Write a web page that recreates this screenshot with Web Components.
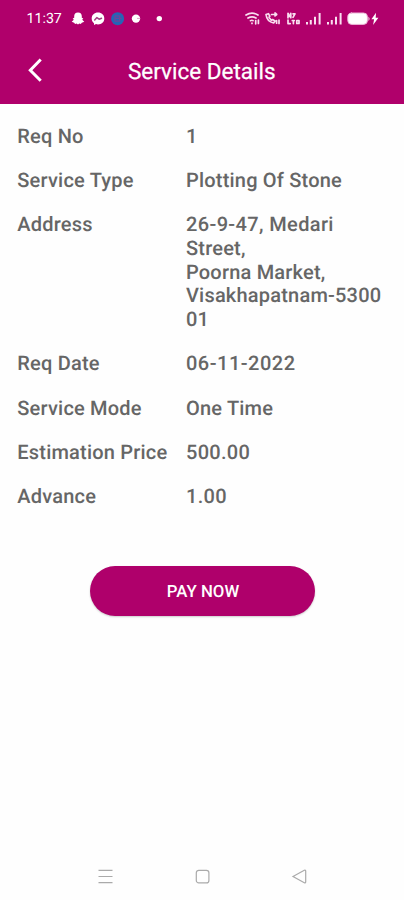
<!DOCTYPE html>
<html lang="en"><head><meta charset="utf-8"><title>Service Details</title>
<style>html,body{margin:0;background:#fefefe}body{font-family:Roboto,"Liberation Sans",sans-serif;text-rendering:geometricPrecision}</style></head>
<body>
<service-screen></service-screen>
<script>
const define = (name, html) => customElements.define(name, class extends HTMLElement {
  constructor() { super(); this.attachShadow({ mode: 'open' }).innerHTML = html; }
});
define('status-bar', `<style>
:host{display:flex;height:38px;align-items:center;color:#fff;box-sizing:border-box}
time{padding-left:26.5px;width:44.5px;font-size:14.2px;font-weight:400;line-height:16px}
svg{display:block;flex:none}
</style><time>11:37</time>
<svg width="333" height="38" viewBox="71 0 333 38" fill="none" stroke-linecap="round" stroke-linejoin="round">
<path fill="#fff" d="M78 12.5c2.6 0 3.8 1.6 3.8 3.7v1.5l1.5.8-1.1 1.3 2.1 2-2.5.9-1 1.3-1.5-.4-1.3.8-1.4-.8-1.5.4-1-1.3-2.4-.9 2.1-2-1.1-1.3 1.5-.8v-1.5c0-2.1 1.2-3.7 3.8-3.7z"/>
<path fill="#fff" d="M98 12.5c3.6 0 6.3 2.5 6.3 6s-2.7 5.9-6.3 5.9l-2-.3-2 .8v-1.7c-1.4-1.1-2.3-2.7-2.3-4.7 0-3.5 2.7-6 6.3-6z"/>
<path stroke="#a43f83" stroke-width="1.5" d="M94.7 20l2.2-2.4 2.2 1.6 2.4-1"/>
<circle cx="117.6" cy="18.7" r="6.5" fill="#2465b6"/>
<path stroke="#6946a0" stroke-width="1.3" d="M115 15.8h4.6v5.4H115zM116 18.4h5"/>
<circle cx="136" cy="18.6" r="4.2" fill="#fff"/><path stroke="#e4a0cc" stroke-width="1" d="M137.4 18.4h2.2"/>
<circle cx="159.3" cy="18.6" r="2.7" fill="#fff"/>
<g stroke="#f9dff0" stroke-width="1.7"><path d="M246 15c3.5-2.2 8.5-2.2 12 0M248 18c2.6-1.5 5.6-1.5 8 0M250.5 20.7c1-.6 1.8-.6 2.5 0M252 23v.4M255.7 20.5v3.3M258.4 20v3.5"/>
<path d="M266 14.5c.6 4.5 3.2 7.6 7.6 8.5l1.4-2-2.4-1.5-1.3.7-2.3-3 .8-1-1.4-2.5zM271.5 14.5h4.5M275 13l1.7 1.5-1.7 1.4M276.6 20.5v2.7M279 20v3.4"/>
<path d="M288 17.8v-4.5l2.8 4.4v-4.4M293 13.8h2l-2 3.5M288 20v3.6h2.2M292.3 20.5h2M293.4 20.5v3.1M296.8 20.5h2.2v3h-2.2z"/></g>
<g fill="#f9dff0"><path d="M306 22h2v2.4h-2zM309.8 20h2v4.4h-2zM314 16.7h2v7.7h-2zM318.6 13h2v11.4h-2zM327 22h2v2.4h-2zM330.8 20h2v4.4h-2zM335 16.7h2v7.7h-2zM339.6 13h2v11.4h-2z"/></g>
<rect x="347.8" y="13" width="19.6" height="11.4" rx="3.8" fill="#fff" stroke="#ecb5d7"/><path fill="#fff" d="M368.5 16.5q2 2.3 0 4.6zM376 12.8l-4.6 6.5h2.7l-1 5.7 5.3-7.3h-2.7z"/>
</svg>`);
define('title-bar', `<style>
:host{display:flex;height:65.5px;align-items:center;color:#fff}
svg{display:block;width:128px;height:65px;flex:none}
h1{margin:2px 0 0;font-size:22.5px;font-weight:400;line-height:28px;-webkit-text-stroke:.25px #fff;white-space:nowrap}
</style><svg viewBox="0 38 128 65" fill="none" stroke="#fff" stroke-width="3"><path d="M40.7 59.5L30.3 70.2l10.4 10.6"/></svg><h1><slot></slot></h1>`);
define('detail-row', `<style>
:host{display:grid;grid-template-columns:168.7px 199px;font-size:20px;line-height:23.6px;font-weight:500;letter-spacing:.2px;color:#666}
dt,dd{margin:0;white-space:nowrap}
dd{letter-spacing:var(--tracking,.2px)}
</style><dt><slot name="label"></slot></dt><dd><slot></slot></dd>`);
define('pill-button', `<style>
:host{display:block}
button{display:block;width:225px;height:50px;border:0;border-radius:25px;padding:1px 0 0 1px;background:#af006b;color:#fff;font:500 16.8px/50px Roboto,"Liberation Sans",sans-serif;text-rendering:geometricPrecision;box-shadow:0 1px 2px #0003}
</style><button><slot></slot></button>`);
define('nav-bar', `<style>
:host{display:flex;justify-content:center;gap:80px;height:48px;align-items:center}
svg{display:block;width:17px;height:17px;fill:none;stroke:#aaa;stroke-width:1.2}
</style>
<svg viewBox="0 0 17 17"><path d="M1.5 2.3h14M1.5 8.5h14M1.5 14.7h14"/></svg>
<svg viewBox="0 0 17 17"><rect x="2.3" y="2.3" width="12.6" height="12.6" rx="2.5"/></svg>
<svg viewBox="0 0 17 17"><path d="M2 8.5L13.3 2.2q1.4-.6 1.4 1v10.6q0 1.6-1.4 1z"/></svg>`);
define('service-screen', `<style>
:host{display:flex;flex-direction:column;width:404px;height:900px;background:#fefefe;overflow:hidden}
header{background:#b0006b;height:103.5px}
main{flex:1;display:flex;flex-direction:column}
dl{margin:0;padding:21.2px 0 0 17.3px;display:grid;gap:20.8px}
pill-button{margin:56.8px 0 0 90px}
.numeric{--tracking:.5px}
.street{letter-spacing:.37px}
</style>
<header><status-bar></status-bar><title-bar>Service Details</title-bar></header>
<main><dl>
<detail-row><span slot="label">Req No</span>1</detail-row>
<detail-row><span slot="label">Service Type</span>Plotting Of Stone</detail-row>
<detail-row><span slot="label">Address</span><span class="street">26-9-47, Medari</span><br>Street,<br>Poorna Market,<br>Visakhapatnam-5300<br>01</detail-row>
<detail-row class="numeric"><span slot="label">Req Date</span>06-11-2022</detail-row>
<detail-row><span slot="label">Service Mode</span>One Time</detail-row>
<detail-row style="--tracking:.3px"><span slot="label">Estimation Price</span>500.00</detail-row>
<detail-row style="--tracking:.3px"><span slot="label">Advance</span>1.00</detail-row>
</dl><pill-button>PAY NOW</pill-button></main>
<nav-bar></nav-bar>`);
</script></body></html>
